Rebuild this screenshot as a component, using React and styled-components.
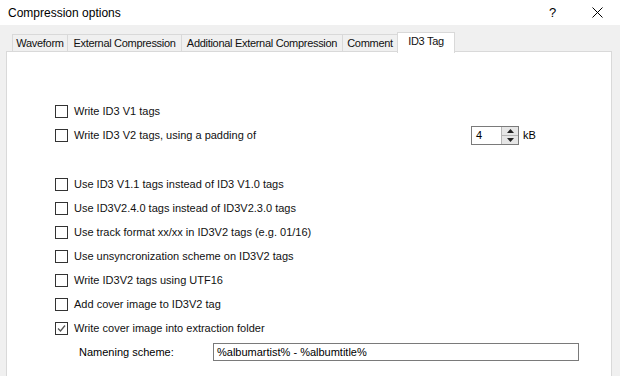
import React from 'react';
import styled, { createGlobalStyle } from 'styled-components';

const GlobalStyle = createGlobalStyle`
  html, body {
    margin: 0;
    padding: 0;
    background: #f0f0f0;
  }
  body {
    font-family: "Liberation Sans", Arial, sans-serif;
    color: #000;
  }
`;

const Window = styled.div`
  width: 620px;
  height: 376px;
  display: flex;
  flex-direction: column;
  background: #f0f0f0;
  overflow: hidden;
`;

const TitleBar = styled.div`
  height: 25px;
  flex: 0 0 25px;
  background: #fff;
  display: flex;
  align-items: center;
  padding-left: 8px;
  font-size: 12px;
`;

const Title = styled.span`
  flex: 1;
`;

const TitleButton = styled.div`
  width: 45px;
  height: 25px;
  display: flex;
  align-items: center;
  justify-content: center;
  font-size: 13px;
`;

const Body = styled.div`
  flex: 1;
  display: flex;
  flex-direction: column;
  padding: 7px 8px 0 6px;
`;

const TabStrip = styled.div`
  display: flex;
  align-items: flex-end;
  height: 20px;
  padding-left: 6px;
  position: relative;
  z-index: 1;
`;

const Tab = styled.div`
  height: ${p => (p.active ? 21 : 18)}px;
  margin: ${p => (p.active ? '0 -2px -1px -1px' : '0')};
  width: ${p => p.w}px;
  box-sizing: border-box;
  display: flex;
  align-items: ${p => (p.active ? 'flex-start' : 'center')};
  padding-top: ${p => (p.active ? '2px' : '0')};
  justify-content: center;
  font-size: 11px;
  letter-spacing: -0.3px;
  white-space: nowrap;
  color: #111;
  background: ${p => (p.active ? '#fff' : '#f0f0f0')};
  border: 1px solid #d9d9d9;
  border-bottom: ${p => (p.active ? 'none' : '1px solid #d9d9d9')};
  border-left: ${p => (p.first || p.active ? '1px solid #d9d9d9' : 'none')};
`;

const Panel = styled.div`
  flex: 1;
  background: #fff;
  border: 1px solid #d9d9d9;
  border-bottom: none;
  margin-top: -1px;
  padding: 47px 0 0 48px;
  font-size: 11px;
`;

const Group = styled.div`
  display: flex;
  flex-direction: column;
  margin-bottom: ${p => p.gap || 0}px;
`;

const Row = styled.div`
  height: 24px;
  display: flex;
  align-items: center;
`;

const Box = styled.div`
  width: 11px;
  height: 11px;
  border: 1px solid #333;
  background: #fff;
  margin-right: 6px;
  flex: 0 0 auto;
  display: flex;
  align-items: center;
  justify-content: center;
`;

const Label = styled.span`
  width: ${p => (p.w ? `${p.w}px` : 'auto')};
  white-space: nowrap;
  color: #111;
`;

const Spin = styled.div`
  display: flex;
  width: 46px;
  height: 17px;
  border: 1px solid #7a7a7a;
  background: #fff;
`;

const SpinValue = styled.div`
  flex: 1;
  padding-left: 4px;
  display: flex;
  align-items: center;
`;

const SpinButtons = styled.div`
  width: 16px;
  display: flex;
  flex-direction: column;
  border-left: 1px solid #b5b5b5;
`;

const SpinButton = styled.div`
  flex: 1;
  background: #e6e6e6;
  display: flex;
  align-items: center;
  justify-content: center;
  border-top: ${p => (p.bottom ? '1px solid #b5b5b5' : 'none')};
`;

const Unit = styled.span`
  margin-left: 4px;
`;

const SchemeRow = styled.div`
  display: flex;
  align-items: center;
  height: 24px;
  padding-left: 24px;
`;

const SchemeLabel = styled.span`
  width: 134px;
`;

const TextInput = styled.div`
  width: 361px;
  height: 16px;
  border: 1px solid #7a7a7a;
  display: flex;
  align-items: center;
  padding-left: 3px;
  white-space: nowrap;
`;

const Arrow = ({ up }) => (
  <svg width="7" height="4" viewBox="0 0 7 4">
    <polygon points={up ? '3.5,0 7,4 0,4' : '0,0 7,0 3.5,4'} fill="#222" />
  </svg>
);

const Check = ({ checked, children, w }) => (
  <Row>
    <Box>
      {checked && (
        <svg width="9" height="9" viewBox="0 0 9 9">
          <polyline points="1,4.5 3.5,7 8,1.5" fill="none" stroke="#555" strokeWidth="1.3" />
        </svg>
      )}
    </Box>
    <Label w={w}>{children}</Label>
  </Row>
);

const tabs = [
  { name: 'Waveform', w: 56 },
  { name: 'External Compression', w: 114 },
  { name: 'Additional External Compression', w: 161 },
  { name: 'Comment', w: 55 },
  { name: 'ID3 Tag', w: 58, active: true },
];

export default function App() {
  return (
    <Window>
      <GlobalStyle />
      <TitleBar>
        <Title>Compression options</Title>
        <TitleButton>?</TitleButton>
        <TitleButton>
          <svg width="11" height="11" viewBox="0 0 11 11">
            <path d="M0.5 0.5 L10.5 10.5 M10.5 0.5 L0.5 10.5" stroke="#000" strokeWidth="1" />
          </svg>
        </TitleButton>
      </TitleBar>
      <Body>
        <TabStrip>
          {tabs.map((t, i) => (
            <Tab key={t.name} w={t.w} active={t.active} first={i === 0}>
              {t.name}
            </Tab>
          ))}
        </TabStrip>
        <Panel>
          <Group gap={25}>
            <Check>Write ID3 V1 tags</Check>
            <Row>
              <Box />
              <Label w={397}>Write ID3 V2 tags, using a padding of</Label>
              <Spin>
                <SpinValue>4</SpinValue>
                <SpinButtons>
                  <SpinButton><Arrow up /></SpinButton>
                  <SpinButton bottom><Arrow /></SpinButton>
                </SpinButtons>
              </Spin>
              <Unit>kB</Unit>
            </Row>
          </Group>
          <Group>
            <Check>Use ID3 V1.1 tags instead of ID3 V1.0 tags</Check>
            <Check>Use ID3V2.4.0 tags instead of ID3V2.3.0 tags</Check>
            <Check>Use track format xx/xx in ID3V2 tags (e.g. 01/16)</Check>
            <Check>Use unsyncronization scheme on ID3V2 tags</Check>
            <Check>Write ID3V2 tags using UTF16</Check>
            <Check>Add cover image to ID3V2 tag</Check>
            <Check checked>Write cover image into extraction folder</Check>
            <SchemeRow>
              <SchemeLabel>Namening scheme:</SchemeLabel>
              <TextInput>%albumartist% - %albumtitle%</TextInput>
            </SchemeRow>
          </Group>
        </Panel>
      </Body>
    </Window>
  );
}
